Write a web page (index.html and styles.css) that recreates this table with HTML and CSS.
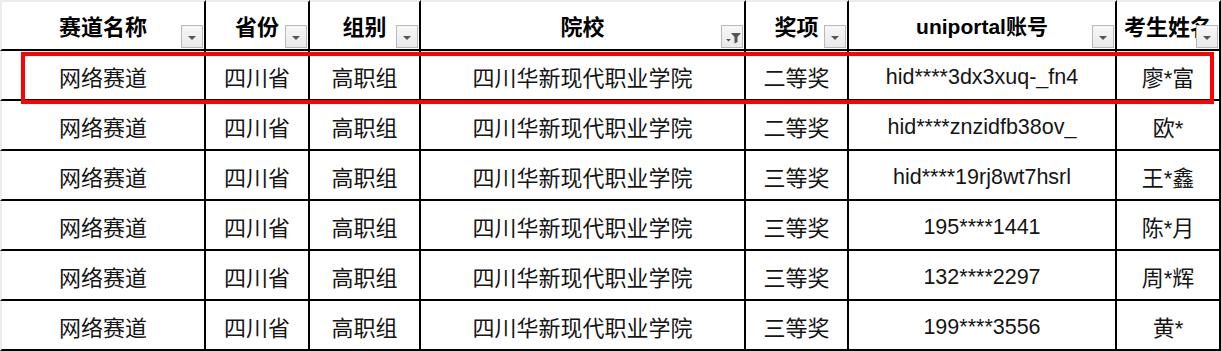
FILE: index.html
```html
<!DOCTYPE html>
<html lang="zh-CN">
<head>
<meta charset="utf-8">
<title>获奖名单</title>
<link rel="stylesheet" href="styles.css">
</head>
<body>
<div class="sheet">
  <div class="grid">
    <div class="hd first">赛道名称<span class="dd"><svg viewBox="0 0 22 23" width="22" height="23"><polygon points="7,11 15,11 11,15" class="tri"/></svg></span></div>
    <div class="hd">省份<span class="dd"><svg viewBox="0 0 22 23" width="22" height="23"><polygon points="7,11 15,11 11,15" class="tri"/></svg></span></div>
    <div class="hd">组别<span class="dd"><svg viewBox="0 0 22 23" width="22" height="23"><polygon points="7,11 15,11 11,15" class="tri"/></svg></span></div>
    <div class="hd">院校<span class="dd"><svg viewBox="0 0 22 23" width="22" height="23"><polygon points="10,8 20,8 16.5,12 16.5,17 13.5,18.5 13.5,12" class="tri"/><polygon points="5,14 10,14 7.5,16.5" class="tri"/></svg></span></div>
    <div class="hd">奖项<span class="dd"><svg viewBox="0 0 22 23" width="22" height="23"><polygon points="7,11 15,11 11,15" class="tri"/></svg></span></div>
    <div class="hd lat">uniportal账号<span class="dd"><svg viewBox="0 0 22 23" width="22" height="23"><polygon points="7,11 15,11 11,15" class="tri"/></svg></span></div>
    <div class="hd">考生姓名<span class="dd"><svg viewBox="0 0 22 23" width="22" height="23"><polygon points="7,11 15,11 11,15" class="tri"/></svg></span></div>

    <div class="c first">网络赛道</div><div class="c">四川省</div><div class="c">高职组</div><div class="c">四川华新现代职业学院</div><div class="c">二等奖</div><div class="c lat">hid****3dx3xuq-_fn4</div><div class="c nm">廖*富</div>
    <div class="c first">网络赛道</div><div class="c">四川省</div><div class="c">高职组</div><div class="c">四川华新现代职业学院</div><div class="c">二等奖</div><div class="c lat">hid****znzidfb38ov_</div><div class="c nm">欧*</div>
    <div class="c first">网络赛道</div><div class="c">四川省</div><div class="c">高职组</div><div class="c">四川华新现代职业学院</div><div class="c">三等奖</div><div class="c lat">hid****19rj8wt7hsrl</div><div class="c nm">王*鑫</div>
    <div class="c first">网络赛道</div><div class="c">四川省</div><div class="c">高职组</div><div class="c">四川华新现代职业学院</div><div class="c">三等奖</div><div class="c lat">195****1441</div><div class="c nm">陈*月</div>
    <div class="c first">网络赛道</div><div class="c">四川省</div><div class="c">高职组</div><div class="c">四川华新现代职业学院</div><div class="c">三等奖</div><div class="c lat">132****2297</div><div class="c nm">周*辉</div>
    <div class="c first">网络赛道</div><div class="c">四川省</div><div class="c">高职组</div><div class="c">四川华新现代职业学院</div><div class="c">三等奖</div><div class="c lat">199****3556</div><div class="c nm">黄*</div>
  </div>
  <div class="highlight"></div>
</div>
</body>
</html>
```

FILE: styles.css
```css
html, body {
  margin: 0;
  padding: 0;
  background: #ffffff;
}

body {
  font-family: "Noto Sans CJK SC", "Liberation Sans", sans-serif;
  color: #151515;
}

.sheet {
  position: relative;
  width: 1221px;
  height: 351px;
  overflow: hidden;
}

.grid {
  display: grid;
  grid-template-columns: 206px 104px 111px 325px 103px 268px 104px;
  grid-template-rows: 51px repeat(6, 50px);
}

.hd,
.c {
  box-sizing: border-box;
  border-right: 2px solid #000;
  border-bottom: 2px solid #000;
  display: flex;
  align-items: center;
  justify-content: center;
  white-space: nowrap;
  font-size: 22px;
}

.hd {
  position: relative;
  font-weight: bold;
  color: #000;
  border-top: 2px solid #ececec;
  padding-bottom: 2px;
}

.c {
  padding-top: 1px;
}

.first {
  border-left: 2px solid #ececec;
}

.lat {
  font-family: "Liberation Sans", "Noto Sans CJK SC", sans-serif;
  font-size: 21.5px;
}

.c.lat {
  padding-top: 4px;
}

.nm {
  font-family: "Liberation Sans", "Noto Sans CJK SC", sans-serif;
  font-size: 22px;
  padding-top: 2px;
}

.hd.lat {
  font-size: 21px;
}

.dd {
  position: absolute;
  right: 1px;
  bottom: 1px;
  width: 22px;
  height: 23px;
  box-sizing: border-box;
  border: 1px solid #b9b9b9;
  background: linear-gradient(#f7f7f7, #e9e9e9);
  display: block;
}

.dd svg {
  display: block;
  margin: -1px 0 0 -1px;
}

.tri {
  fill: #555;
}

.highlight {
  position: absolute;
  left: 21px;
  top: 52px;
  width: 1193px;
  height: 52px;
  box-sizing: border-box;
  border: 4px solid #f00;
}
```
